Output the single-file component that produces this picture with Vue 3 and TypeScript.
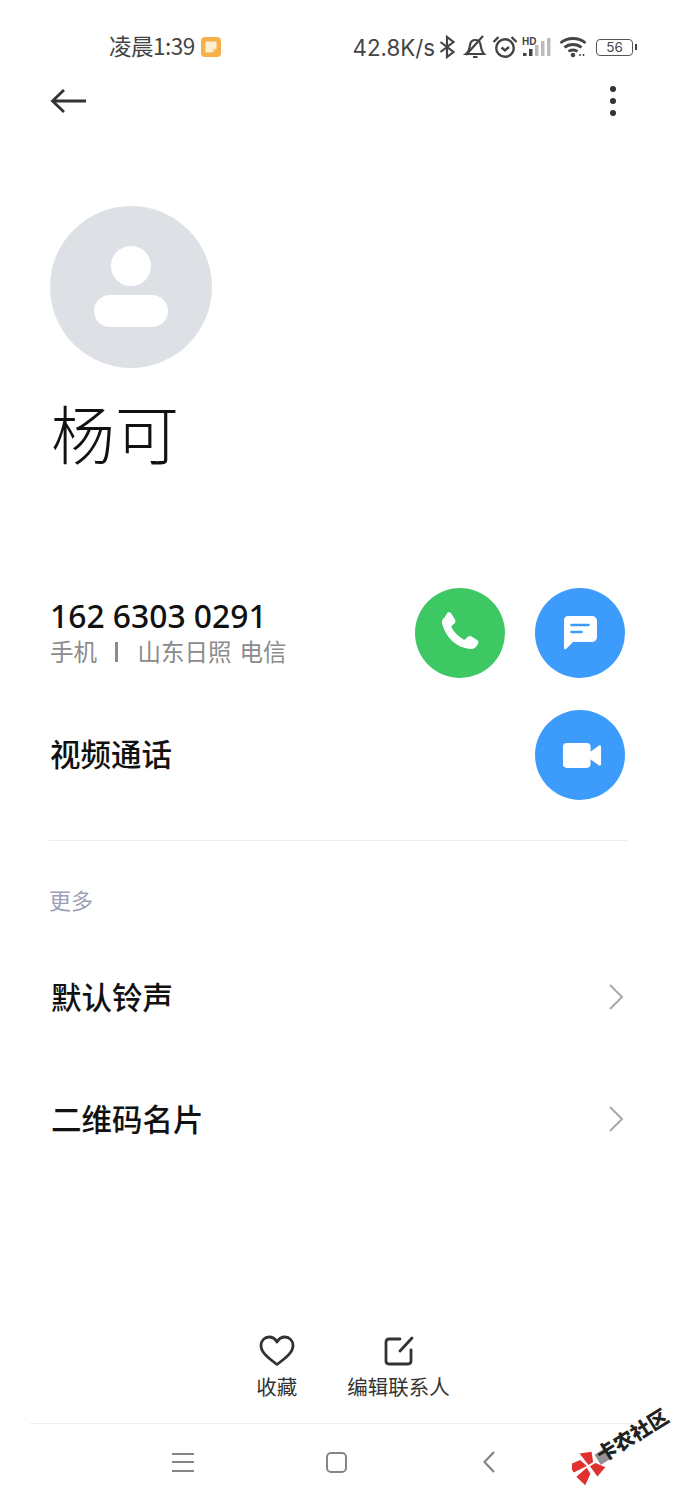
<script setup lang="ts">
const moreRows = ['默认铃声', '二维码名片']
</script>

<template>
  <div class="screen">
    <div class="status">
      <div class="status-left">
        <span>凌晨1:39</span>
        <svg class="note" width="20" height="20" viewBox="0 0 20 20">
          <rect x="0" y="0" width="20" height="20" rx="4" fill="#f6b04a" />
          <path d="M4.500 4.500h11v7l-4 4h-7z" fill="#fdeed6" />
          <path d="M15.500 11.500l-4 4v-4z" fill="#f9cf8e" />
        </svg>
      </div>
      <div class="status-right">
        <span class="speed">42.8K/s</span>
        <svg width="16" height="24" viewBox="0 0 16 24" fill="none" stroke="#444" stroke-width="2.200">
          <path d="M1.500 7l13 10-6.500 5V2l6.500 5-13 10" />
        </svg>
        <svg class="bell" width="24" height="24" viewBox="0 0 24 24" fill="none" stroke="#444" stroke-width="2.200">
          <path d="M3 19c3-2 3.500-5 4-9 .4-3 2.500-5 5.500-5 2.500 0 4.500 1.800 5 4.500.6 3.500 1 7 3.500 9.500z" />
          <path d="M10 22h4.500M3 20L20 1" />
        </svg>
        <svg class="alarm" width="26" height="24" viewBox="0 0 26 24" fill="none" stroke="#444" stroke-width="2.400">
          <circle cx="13" cy="13" r="8.800" />
          <path d="M9.500 12.500l3.500 3 4-3.500M1.500 7l5-5M24.500 7l-5-5" />
        </svg>
        <svg class="signal" width="30" height="24" viewBox="0 0 30 24">
          <text x="0" y="10" class="hd">HD</text>
          <rect x="1" y="18" width="3.500" height="3" fill="#444" />
          <rect x="7" y="14" width="3.500" height="7" fill="#444" />
          <rect x="13" y="10" width="3.500" height="11" fill="#bbb" />
          <rect x="19" y="6" width="3.500" height="15" fill="#bbb" />
          <rect x="25" y="3" width="3.500" height="18" fill="#bbb" />
        </svg>
        <svg class="wifi" width="28" height="22" viewBox="0 0 28 22" fill="none" stroke="#444" stroke-width="2.800">
          <path d="M1.500 7c7-6 18-6 25 0M5.500 11.500c4.500-4 12.500-4 17 0M9.500 15.500c2.500-2 6.500-2 9 0" />
          <circle cx="14" cy="19" r="2.300" fill="#444" stroke="none" />
          <path d="M21 20v-2M24.500 20v-2" stroke-width="1.500" />
        </svg>
        <div class="battery">
          <div class="battery-body">56</div>
          <div class="battery-cap"></div>
        </div>
      </div>
    </div>

    <div class="topbar">
      <svg width="37" height="28" viewBox="0 0 37 28" fill="none" stroke="#333" stroke-width="2.800">
        <path d="M36 14H3M14 3L2.500 14 14 25" />
      </svg>
      <div class="dots"><i></i><i></i><i></i></div>
    </div>

    <div class="avatar">
      <div class="avatar-head"></div>
      <div class="avatar-body"></div>
    </div>
    <h1 class="name">杨可</h1>

    <div class="contact-row phone-row">
      <div class="phone-info">
        <div class="number">162 6303 0291</div>
        <div class="sub">
          <span>手机</span>
          <i class="sep"></i>
          <span>山东日照</span>
          <span class="carrier">电信</span>
        </div>
      </div>
      <div class="buttons">
        <button class="round green">
          <svg width="48" height="48" viewBox="0 0 44 44" fill="#fff">
            <path d="M10.500 3.500c1.300-.8 2.800-.4 3.600.9l3.300 5.300c.7 1.200.5 2.600-.5 3.500l-2.200 2c-.6.500-.7 1.300-.3 2 2.400 4.500 6 8 10.700 10.700.7.400 1.500.3 2-.3l1.900-2c1-1 2.400-1.200 3.600-.4l5 3.200c1.300.8 1.600 2.400.8 3.600l-1.400 2.200c-1.300 2-3.600 3-5.900 2.400C18.500 35.500 9 26 5.600 13.500 5 11.300 6 9 7.900 7.600z" />
          </svg>
        </button>
        <button class="round blue">
          <svg width="40" height="40" viewBox="0 0 40 40">
            <path d="M8 3h24c2.800 0 5 2.200 5 5v16c0 2.800-2.200 5-5 5H13l-7 7c-.8.700-2 .2-2-.9V7c0-2.200 1.800-4 4-4z" fill="#fff" />
            <path d="M11.500 12h17M11.500 19h10" stroke="#3d9bfb" stroke-width="2.600" stroke-linecap="round" />
          </svg>
        </button>
      </div>
    </div>

    <div class="contact-row video-row">
      <div class="row-label">视频通话</div>
      <button class="round blue">
        <svg class="video-icon" width="40" height="27" viewBox="0 0 42 28" fill="#fff">
          <rect x="1" y="1" width="29" height="26" rx="4" />
          <path d="M29 10.500l10-7c1-.6 2 .1 2 1.200v18.600c0 1.100-1 1.800-2 1.200l-10-7z" />
        </svg>
      </button>
    </div>

    <div class="divider"></div>
    <div class="section-title">更多</div>

    <div v-for="row in moreRows" :key="row" class="more-row">
      <span class="row-label">{{ row }}</span>
      <svg width="18" height="28" viewBox="0 0 18 28" fill="none" stroke="#a9a9a9" stroke-width="2">
        <path d="M3 2l12 12L3 26" />
      </svg>
    </div>

    <div class="actions">
      <div class="action">
        <svg width="36" height="32" viewBox="0 0 36 32" fill="none" stroke="#333" stroke-width="2.800" stroke-linejoin="round">
          <path d="M18 29.500C8 22 2 17 2 10.500 2 5.500 5.800 2 10 2c3.300 0 6.300 1.800 8 5 1.700-3.200 4.700-5 8-5 4.200 0 8 3.500 8 8.500C34 17 28 22 18 29.500z" />
        </svg>
        <span>收藏</span>
      </div>
      <div class="action">
        <svg width="32" height="32" viewBox="0 0 32 32" fill="none" stroke="#333" stroke-width="2.800" stroke-linecap="round">
          <path d="M17 4H6C4 4 3 5 3 7v19c0 2 1 3 3 3h19c2 0 3-1 3-3V15" />
          <path d="M17 16L29 3" />
        </svg>
        <span>编辑联系人</span>
      </div>
    </div>

    <div class="navbar">
      <div class="nav-menu"><i></i><i></i><i></i></div>
      <div class="nav-home"></div>
      <svg width="14" height="24" viewBox="0 0 14 24" fill="none" stroke="#858585" stroke-width="2.200">
        <path d="M12 2L2.500 12 12 22" />
      </svg>
    </div>

    <svg class="wm-logo" width="42" height="36" viewBox="0 0 42 36">
      <g transform="rotate(-32 16 18)">
        <path d="M1 6l12 2 2.500 8.500L1 15zM16 2l11 5-4 9.500-5.500 0zM1 20l13.500-2 0 7L4 32zM18 18.500h6.500l6 9L19 31z" fill="#e0312f" />
        <rect x="28" y="11" width="11" height="12" fill="#939393" />
      </g>
    </svg>
    <div class="wm-text">卡农社区</div>
  </div>
</template>

<style>
html,
body {
  margin: 0;
  background: #fff;
}
</style>

<style scoped>
.screen {
  position: relative;
  width: 675px;
  height: 1500px;
  overflow: hidden;
  background: #fff;
  color: #000;
  font-family: "Noto Sans CJK SC", "Noto Sans", sans-serif;
}

.status {
  height: 44px;
  padding: 25px 38px 0 109px;
  display: flex;
  justify-content: space-between;
  align-items: center;
  color: #444;
  font-size: 22.500px;
}

.status-left,
.status-right {
  display: flex;
  align-items: center;
}

.status-left span {
  padding-bottom: 4px;
  letter-spacing: -0.5px;
}

.note {
  margin-left: 6px;
}

.speed {
  font-family: Inter, sans-serif;
  font-size: 22.300px;
  margin-right: 4px;
}

.bell {
  margin-left: 8px;
}

.alarm {
  margin-left: 5px;
}

.signal {
  margin-left: 4px;
}

.hd {
  font-family: "Liberation Sans", sans-serif;
  font-size: 10px;
  font-weight: 700;
  fill: #444;
}

.wifi {
  margin-left: 7px;
}

.battery {
  margin-left: 9px;
  display: flex;
  align-items: center;
}

.battery-body {
  width: 35px;
  height: 15px;
  border: 1.500px solid #555;
  border-radius: 4px;
  font-family: Inter, sans-serif;
  font-size: 13.500px;
  line-height: 15px;
  text-align: center;
}

.battery-cap {
  width: 2px;
  height: 6px;
  margin-left: 2px;
  background: #444;
}

.topbar {
  height: 64px;
  padding: 0 59px 0 50px;
  display: flex;
  justify-content: space-between;
  align-items: center;
}

.dots {
  display: flex;
  flex-direction: column;
  gap: 6px;
}

.dots i {
  width: 6px;
  height: 6px;
  border-radius: 50%;
  background: #333;
}

.avatar {
  width: 162px;
  height: 162px;
  margin: 73px 0 0 50px;
  border-radius: 50%;
  background: #dde1e6;
  display: flex;
  flex-direction: column;
  align-items: center;
}

.avatar-head {
  width: 40px;
  height: 40px;
  margin-top: 40px;
  border-radius: 50%;
  background: #fff;
}

.avatar-body {
  width: 74px;
  height: 32px;
  margin-top: 9px;
  border-radius: 16px;
  background: #fff;
}

.name {
  height: 105px;
  margin: 13px 0 0 51px;
  font-size: 64px;
  font-weight: 300;
  line-height: 100px;
  color: #111;
}

.contact-row {
  padding: 0 50px;
  display: flex;
  justify-content: space-between;
  align-items: center;
}

.phone-row {
  margin-top: 102px;
}

.phone-info {
  padding-bottom: 5px;
}

.video-row {
  margin-top: 32px;
}

.video-row .row-label {
  padding-bottom: 5px;
}

.video-icon {
  margin-left: 4px;
}

.number {
  font-family: "Noto Sans", sans-serif;
  font-size: 31.800px;
  font-weight: 500;
  line-height: 40px;
  color: #111;
}

.sub {
  display: flex;
  align-items: center;
  font-size: 23.500px;
  line-height: 30px;
  color: #8b8b8b;
}

.sep {
  width: 2.500px;
  height: 20px;
  margin: 3px 20px 0 18px;
  background: #8b8b8b;
}

.carrier {
  margin-left: 8px;
}

.buttons {
  display: flex;
  gap: 30px;
}

.round {
  width: 90px;
  height: 90px;
  padding: 0;
  border: 0;
  border-radius: 50%;
  display: flex;
  align-items: center;
  justify-content: center;
}

.green {
  background: #3dc864;
}

.blue {
  background: #3d9bfb;
}

.row-label {
  font-size: 30.500px;
  font-weight: 500;
  color: #111;
}

.divider {
  height: 1px;
  margin: 40px 48px 0 49px;
  background: #ededed;
}

.section-title {
  margin: 42px 0 0 49px;
  font-size: 22px;
  line-height: 32px;
  color: #9b9fb8;
}

.more-row {
  height: 122px;
  padding: 0 50px 0 51px;
  display: flex;
  justify-content: space-between;
  align-items: center;
}

.more-row .row-label {
  padding-bottom: 2px;
}

.section-title + .more-row {
  margin-top: 21px;
}

.actions {
  position: absolute;
  left: 0;
  right: 0;
  bottom: 76px;
  padding: 2px 0 0 31px;
  height: 88px;
  border-bottom: 1px solid #f0f0f0;
  margin: 0 30px;
  display: flex;
  justify-content: center;
  gap: 50px;
}

.action {
  display: flex;
  flex-direction: column;
  align-items: center;
  gap: 4px;
  font-size: 20.500px;
  line-height: 30px;
  color: #333;
}

.navbar {
  position: absolute;
  left: 0;
  right: 0;
  bottom: 0;
  height: 76px;
  padding: 0 179px 0 172px;
  box-sizing: border-box;
  display: flex;
  justify-content: space-between;
  align-items: center;
}

.nav-menu {
  width: 22px;
  display: flex;
  flex-direction: column;
  gap: 6.500px;
}

.nav-menu i {
  height: 2px;
  background: #858585;
}

.nav-home {
  width: 17px;
  height: 17px;
  margin-left: -3px;
  border: 2px solid #858585;
  border-radius: 5px;
}

.wm-logo {
  position: absolute;
  left: 572px;
  top: 1449px;
}

.wm-text {
  position: absolute;
  left: 592px;
  top: 1423px;
  width: 80px;
  height: 24px;
  transform: rotate(-32deg);
  font-size: 20px;
  font-weight: 900;
  line-height: 24px;
  color: #222;
  white-space: nowrap;
}
</style>
